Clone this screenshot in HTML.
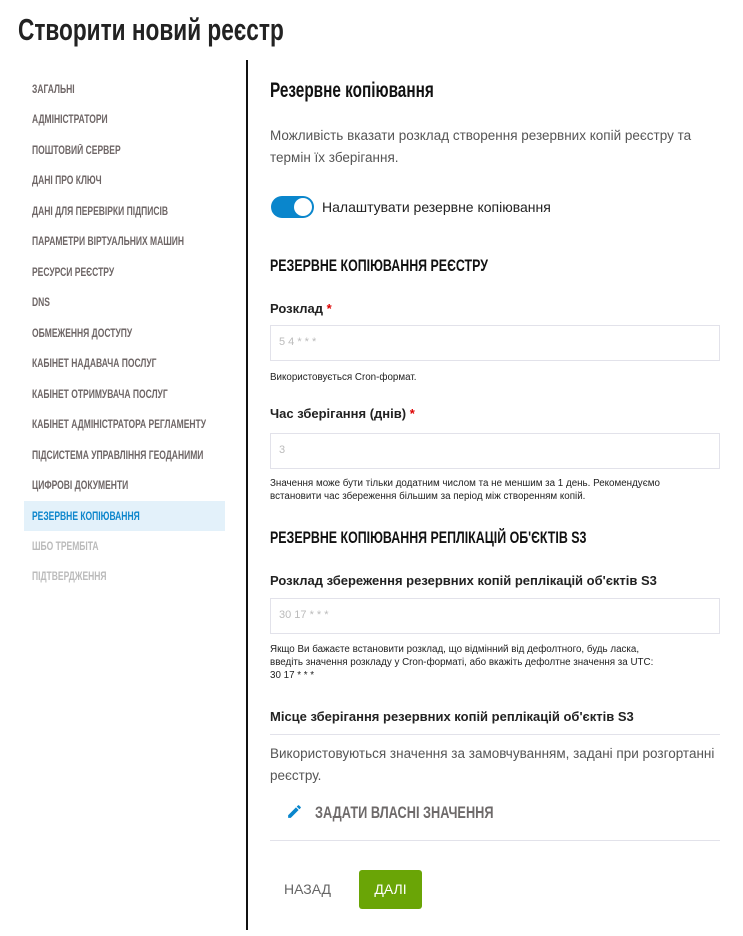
<!DOCTYPE html>
<html><head><meta charset="utf-8"><style>
*{margin:0;padding:0;box-sizing:border-box}
body{width:743px;height:936px;background:#fff;position:relative;font-family:"Liberation Sans",sans-serif;color:#222;overflow:hidden}
.c{font-family:"Liberation Sans",sans-serif;font-weight:bold;transform:scaleX(0.73);transform-origin:0 0}
.a{position:absolute;white-space:nowrap}
.nav{position:absolute;left:32px;font-size:11.5px;color:#6e6666;white-space:nowrap;transform:scaleX(0.74)}
.in{position:absolute;left:270px;width:450px;height:36px;border:1px solid #e2e2ea;font-size:11px;color:#bbb;padding:10px 8px}
.lbl{position:absolute;left:270px;font-size:13px;font-weight:bold;color:#222}
.small{position:absolute;left:270px;font-size:9.8px;color:#222;line-height:13px}
.p{position:absolute;left:270px;font-size:13.5px;color:#555;line-height:22px}
</style></head><body>
<div class="a c" style="left:18px;top:12px;font-size:31px;color:#222">Створити новий реєстр</div>
<div style="position:absolute;left:246px;top:60px;width:2px;height:870px;background:#111"></div>
<div style="position:absolute;left:24px;top:501px;width:201px;height:30px;background:#e3f1fa"></div>
<div class="nav c" style="top:84px">ЗАГАЛЬНІ</div>
<div class="nav c" style="top:114px">АДМІНІСТРАТОРИ</div>
<div class="nav c" style="top:145px">ПОШТОВИЙ СЕРВЕР</div>
<div class="nav c" style="top:175px">ДАНІ ПРО КЛЮЧ</div>
<div class="nav c" style="top:206px">ДАНІ ДЛЯ ПЕРЕВІРКИ ПІДПИСІВ</div>
<div class="nav c" style="top:236px">ПАРАМЕТРИ ВІРТУАЛЬНИХ МАШИН</div>
<div class="nav c" style="top:267px">РЕСУРСИ РЕЄСТРУ</div>
<div class="nav c" style="top:297px">DNS</div>
<div class="nav c" style="top:328px">ОБМЕЖЕННЯ ДОСТУПУ</div>
<div class="nav c" style="top:358px">КАБІНЕТ НАДАВАЧА ПОСЛУГ</div>
<div class="nav c" style="top:389px">КАБІНЕТ ОТРИМУВАЧА ПОСЛУГ</div>
<div class="nav c" style="top:419px">КАБІНЕТ АДМІНІСТРАТОРА РЕГЛАМЕНТУ</div>
<div class="nav c" style="top:450px">ПІДСИСТЕМА УПРАВЛІННЯ ГЕОДАНИМИ</div>
<div class="nav c" style="top:480px">ЦИФРОВІ ДОКУМЕНТИ</div>
<div class="nav c" style="top:511px;color:#0d86cc">РЕЗЕРВНЕ КОПІЮВАННЯ</div>
<div class="nav c" style="top:541px;color:#bbb">ШБО ТРЕМБІТА</div>
<div class="nav c" style="top:571px;color:#bbb">ПІДТВЕРДЖЕННЯ</div>

<div class="a c" style="left:270px;top:79px;font-size:21px;color:#111">Резервне копіювання</div>
<div class="p" style="top:125px">Можливість вказати розклад створення резервних копій реєстру та<br>термін їх зберігання.</div>
<div style="position:absolute;left:271px;top:196px;width:43px;height:22px;border-radius:11px;background:#0a86cc"></div>
<div style="position:absolute;left:294px;top:198px;width:18px;height:18px;border-radius:50%;background:#fff"></div>
<div class="a" style="left:322px;top:199px;font-size:14px;color:#222">Налаштувати резервне копіювання</div>
<div class="a c" style="left:270px;top:256px;font-size:17px;color:#111">РЕЗЕРВНЕ КОПІЮВАННЯ РЕЄСТРУ</div>
<div class="lbl" style="top:301px">Розклад <span style="color:#d00">*</span></div>
<div class="in" style="top:325px">5 4 * * *</div>
<div class="small" style="top:371px">Використовується Cron-формат.</div>
<div class="lbl" style="top:406px">Час зберігання (днів) <span style="color:#d00">*</span></div>
<div class="in" style="top:433px">3</div>
<div class="small" style="top:477px">Значення може бути тільки додатним числом та не меншим за 1 день. Рекомендуємо<br>встановити час збереження більшим за період між створенням копій.</div>
<div class="a c" style="left:270px;top:528px;font-size:17px;color:#111">РЕЗЕРВНЕ КОПІЮВАННЯ РЕПЛІКАЦІЙ ОБ'ЄКТІВ S3</div>
<div class="lbl" style="top:573px">Розклад збереження резервних копій реплікацій об'єктів S3</div>
<div class="in" style="top:598px">30 17 * * *</div>
<div class="small" style="top:643px">Якщо Ви бажаєте встановити розклад, що відмінний від дефолтного, будь ласка,<br>введіть значення розкладу у Cron-форматі, або вкажіть дефолтне значення за UTC:<br>30 17 * * *</div>
<div class="lbl" style="top:709px">Місце зберігання резервних копій реплікацій об'єктів S3</div>
<div style="position:absolute;left:270px;top:734px;width:450px;height:1px;background:#e2e2ea"></div>
<div class="p" style="top:743px">Використовуються значення за замовчуванням, задані при розгортанні<br>реєстру.</div>
<svg style="position:absolute;left:286px;top:803px" width="17" height="17" viewBox="0 0 24 24"><path fill="#0a86cc" d="M3 17.25V21h3.75L17.81 9.94l-3.75-3.75L3 17.25zM20.71 7.04a1 1 0 000-1.41l-2.34-2.34a1 1 0 00-1.41 0l-1.83 1.83 3.75 3.75 1.83-1.83z"/></svg>
<div class="a c" style="left:315px;top:803px;font-size:17px;color:#6e6a6a;transform:scaleX(0.75)">ЗАДАТИ ВЛАСНІ ЗНАЧЕННЯ</div>
<div style="position:absolute;left:270px;top:840px;width:450px;height:1px;background:#e2e2ea"></div>
<div class="a" style="left:284px;top:881px;font-size:14px;color:#666">НАЗАД</div>
<div style="position:absolute;left:359px;top:870px;width:63px;height:39px;background:#6aa506;border-radius:3px;color:#fff;font-size:14px;text-align:center;line-height:39px">ДАЛІ</div>
</body></html>
